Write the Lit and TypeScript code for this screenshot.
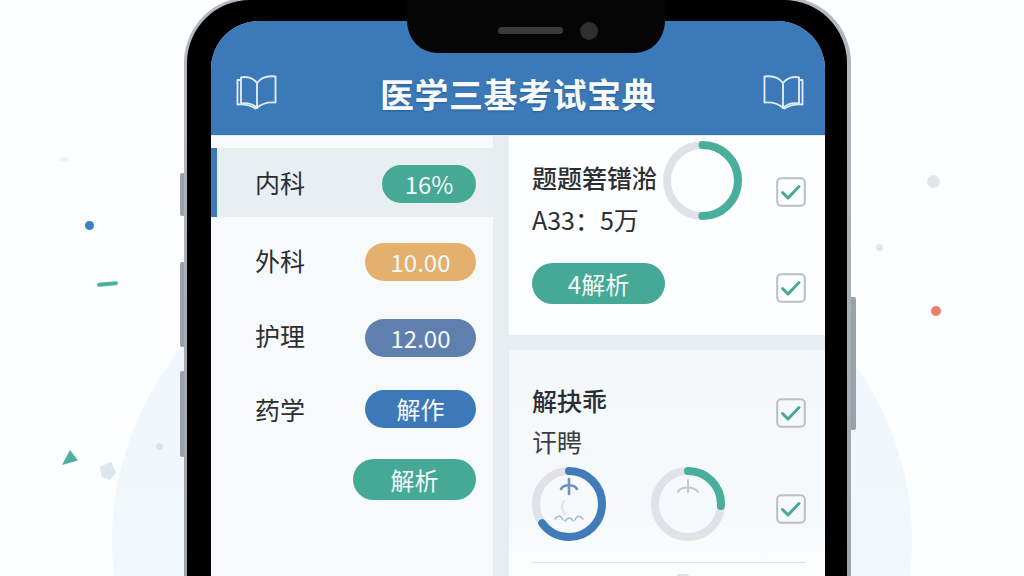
import { LitElement, html, css, svg } from "lit";
import { customElement } from "lit/decorators.js";

const book = (mirror: boolean) => html`<svg class="book ${mirror ? "mirror" : ""}" viewBox="0 0 41 35" fill="none" stroke="#dfeaf5" stroke-width="1.9" stroke-linejoin="round" stroke-linecap="round">
  <path d="M5 2.5 C10 1 17 2.5 21 8 V33 C17 29 11 27.5 5 28.5 Z"/>
  <path d="M21 8 C25 2.5 32 0.5 39.5 1.5 V27.5 C32 27 25 29 21 33"/>
  <path d="M5 5 H1.5 V29.5 C8 29 15 30.5 19.5 33.5"/>
</svg>`;

const check = html`<svg class="check" viewBox="0 0 30 30" fill="none">
  <rect x="1.2" y="1.2" width="27.6" height="27.6" rx="4" stroke="#b9bfc2" stroke-width="2"/>
  <path d="M6.5 15.5 L12 21 L23 9.5" stroke="#4aa898" stroke-width="3" stroke-linecap="round" stroke-linejoin="round"/>
</svg>`;

const ring = (size: number, sw: number, frac: number, color: string, inner: unknown = null) => {
  const r = (size - sw) / 2;
  const c = 2 * Math.PI * r;
  return html`<svg class="ring" style="width:${size}px;height:${size}px" viewBox="0 0 ${size} ${size}" fill="none">
    <circle cx="${size / 2}" cy="${size / 2}" r="${r}" stroke="#dfe3e8" stroke-width="${sw}"/>
    <circle cx="${size / 2}" cy="${size / 2}" r="${r}" stroke="${color}" stroke-width="${sw}" stroke-linecap="round"
      stroke-dasharray="${c * frac} ${c}" transform="rotate(-90 ${size / 2} ${size / 2})"/>
    ${inner}
  </svg>`;
};

const glyphA = svg`<g stroke="#6f93bd" stroke-width="2" stroke-linecap="round" fill="none">
  <path d="M37 12 V27 M29 22 C32 17 42 17 45 22" stroke-width="2.6"/>
  <path d="M32 34 C29 38 30 44 33 47" stroke="#dbe2e8"/>
  <path d="M23 52 C26 48 29 48 31 53 M33 54 C36 50 39 50 41 54 M43 53 C45 48 48 48 51 52" stroke="#9fb6cd" stroke-width="1.4"/>
</g>`;
const glyphB = svg`<g stroke="#c2c8cc" stroke-width="2" stroke-linecap="round" fill="none">
  <path d="M37 13 V25 M27 25 C30 19 43 19 47 25"/>
</g>`;

@customElement("app-root")
export class AppRoot extends LitElement {
  static styles = css`
    :host {
      display: block; position: relative; width: 1024px; height: 576px; overflow: hidden;
      background: #fdfeff;
      font-family: "Noto Sans CJK SC", "Noto Sans", sans-serif; color: #2b2f33;
    }
    .halo {
      position: absolute; left: 112px; top: 198px; width: 800px; height: 684px; border-radius: 50%;
      background: linear-gradient(#f0f6fb, #f4f8fc);
    }
    .deco { position: absolute; }
    .dot-blue { left: 85px; top: 221px; width: 9px; height: 9px; border-radius: 50%; background: #3d7fba; }
    .dash { left: 97px; top: 282px; width: 21px; height: 4px; border-radius: 2px; background: #4bb09c; transform: rotate(-5deg); }
    .tri { left: 62px; top: 450px; width: 16px; height: 15px; background: #4bb09c; clip-path: polygon(50% 0, 100% 70%, 0 100%); }
    .gem { left: 100px; top: 462px; width: 16px; height: 18px; background: #dde6ee; clip-path: polygon(0 25%, 70% 0, 100% 60%, 60% 100%, 10% 80%); }
    .dot-s1 { left: 156px; top: 443px; width: 7px; height: 7px; border-radius: 50%; background: #dde3e8; }
    .dot-g1 { left: 927px; top: 175px; width: 13px; height: 13px; border-radius: 50%; background: #e3e7ed; }
    .dot-g2 { left: 876px; top: 244px; width: 7px; height: 7px; border-radius: 50%; background: #e3e7eb; }
    .dot-r { left: 931px; top: 306px; width: 10px; height: 10px; border-radius: 50%; background: #e8806a; }
    .dot-g3 { left: 60px; top: 157px; width: 9px; height: 5px; border-radius: 50%; background: #f1f3f5; }
    .btn { position: absolute; background: #9aa1a8; border-radius: 2px; }
    .b1 { left: 180px; top: 173px; width: 5px; height: 43px; }
    .b2 { left: 180px; top: 262px; width: 5px; height: 85px; }
    .b3 { left: 180px; top: 371px; width: 5px; height: 86px; }
    .b4 { left: 850px; top: 297px; width: 6px; height: 133px; }

    .phone {
      position: absolute; left: 184px; top: -3px; width: 667px; height: 660px; box-sizing: border-box;
      border-radius: 66px; background: linear-gradient(#b4babf, #9aa1a7);
      padding: 3px 4px 3px 3px;
    }
    .frame {
      position: relative; height: 100%; box-sizing: border-box; background: #000; border-radius: 63px;
      padding: 21px 22px 0 24px;
    }
    .notch {
      position: absolute; left: 220px; top: 0; width: 258px; height: 53px; background: #050505;
      border-radius: 0 0 30px 30px / 0 0 32px 32px;
    }
    .speaker { position: absolute; left: 91px; top: 27px; width: 65px; height: 7px; border-radius: 4px; background: #3b3b3b; }
    .cam { position: absolute; left: 173px; top: 22px; width: 18px; height: 18px; border-radius: 50%; background: #2e2f31; }
    .screen {
      height: 100%; background: #e8edf1; border-radius: 48px 48px 0 0; overflow: hidden;
      display: flex; flex-direction: column;
    }
    header {
      height: 114px; flex: none; box-sizing: border-box; background: #3b79b8;
      display: flex; align-items: center; justify-content: space-between;
      padding: 32px 21px 0 25px;
    }
    .book { width: 41px; height: 35px; display: block; margin-top: -3px; }
    .mirror { transform: scaleX(-1); }
    h1 {
      margin: 0; font-size: 34px; line-height: 48px; font-weight: 700; color: #f6fafd; letter-spacing: 0.5px;
      text-shadow: 0 1px 2px rgba(20, 50, 90, .4); position: relative; left: -2px;
    }
    .body { display: flex; gap: 16px; flex: 1; min-height: 0; padding-top: 1px; }
    .side {
      width: 282px; flex: none; padding-top: 12px; background: #f7fafb;
      display: flex; flex-direction: column; box-sizing: border-box;
    }
    .row {
      display: flex; align-items: center; justify-content: space-between; box-sizing: border-box;
      padding: 0 17px 0 44px; font-size: 25px; color: #2b2f33;
    }
    .row.active { height: 69px; background: #e9eef2; border-left: 6px solid #3b79b8; padding: 3px 17px 0 38px; }
    .r2 { height: 85px; padding-top: 4px; }
    .r3 { height: 71px; }
    .r4 { height: 71px; padding-top: 1px; }
    .r5 { height: 70px; padding-top: 1px; justify-content: flex-end; }
    .l1 { margin-bottom: 4px; }
    .l2 { margin-bottom: 4px; }
    .l3 { margin-bottom: 6px; }
    .pill {
      display: flex; align-items: center; justify-content: center; border-radius: 21px; color: #f4f8f8;
      height: 38px; width: 111px; font-size: 24px; line-height: 1;
    }
    .teal { background: #45a995; }
    .w94 { width: 94px; }
    .gold { background: #e3b06e; }
    .slate { background: #5f80ae; }
    .blue { background: #3d78b8; }
    .w123 { width: 123px; height: 41px; }

    .main { flex: 1; display: flex; flex-direction: column; gap: 15px; min-width: 0; }
    .card1 {
      height: 199px; flex: none; box-sizing: border-box; background: #fdfeff; padding: 5px 19px 0 23px;
      display: grid; grid-template-columns: 131px 79px 1fr; grid-template-rows: 79px 1fr; align-items: start;
    }
    .text { padding-top: 18px; white-space: nowrap; font-size: 25px; line-height: 36px; }
    .text .t { line-height: 36px; font-weight: 500; }
    .text .s { margin-top: 6px; }
    .check { width: 30px; height: 30px; display: block; justify-self: end; }
    .c1 { margin-top: 36px; }
    .pillcell { grid-column: 1 / span 2; margin-top: 43px; }
    .c2 { grid-column: 3; margin-top: 53px; }
    .pill4 { width: 133px; height: 41px; }
    .ring { display: block; }

    .card2 {
      flex: 1; background: linear-gradient(#f4f8fa 0, #f5f9fb 55%, #fdfefe 75%); padding: 0 19px 0 23px;
      display: flex; flex-direction: column;
    }
    .c2top { display: flex; justify-content: space-between; align-items: flex-start; padding-top: 32px; height: 73px; flex: none; box-sizing: border-box; }
    .c2top .title { font-size: 25px; line-height: 36px; font-weight: 500; }
    .c2top .check { margin-top: 16px; }
    .sub { font-size: 25px; line-height: 36px; color: #3a3e42; }
    .rings { display: flex; align-items: flex-start; margin-top: 8px; height: 74px; }
    .rings .gap { width: 45px; }
    .rings .check { margin: 27px 0 0 auto; }
    hr { border: 0; height: 1px; background: #dfe3e7; margin: 21px 0 0; }
    .tail { width: 12px; height: 3px; margin: 11px 0 0 145px; background: #dde1e5; border-radius: 2px 2px 0 0; flex: none; }
  `;

  render() {
    return html`
      <div class="halo"></div>
      <i class="deco dot-blue"></i><i class="deco dash"></i><i class="deco tri"></i><i class="deco gem"></i>
      <i class="deco dot-s1"></i><i class="deco dot-g1"></i><i class="deco dot-g2"></i><i class="deco dot-r"></i><i class="deco dot-g3"></i>
      <i class="btn b1"></i><i class="btn b2"></i><i class="btn b3"></i><i class="btn b4"></i>
      <div class="phone">
        <div class="frame">
          <div class="screen">
            <header>${book(false)}<h1>医学三基考试宝典</h1>${book(true)}</header>
            <div class="body">
              <aside class="side">
                <div class="row active"><span class="l1">内科</span><span class="pill teal w94">16%</span></div>
                <div class="row r2"><span class="l2">外科</span><span class="pill gold">10.00</span></div>
                <div class="row r3"><span class="l3">护理</span><span class="pill slate">12.00</span></div>
                <div class="row r4"><span>药学</span><span class="pill blue">解作</span></div>
                <div class="row r5"><span class="pill teal w123">解析</span></div>
              </aside>
              <div class="main">
                <section class="card1">
                  <div class="text"><div class="t">题题箬镨湁</div><div class="s">A33：5万</div></div>
                  ${ring(79, 8, 0.5, "#4aae9c")}
                  ${html`<div class="check c1">${check}</div>`}
                  <div class="pillcell"><span class="pill teal pill4">4解析</span></div>
                  ${html`<div class="check c2">${check}</div>`}
                </section>
                <section class="card2">
                  <div class="c2top"><span class="title">解抉乖</span>${check}</div>
                  <div class="sub">讦䀻</div>
                  <div class="rings">
                    ${ring(74, 8, 0.65, "#3f7cb9", glyphA)}
                    <span class="gap"></span>
                    ${ring(74, 8, 0.26, "#4aae9c", glyphB)}
                    ${check}
                  </div>
                  <hr />
                  <div class="tail"></div>
                </section>
              </div>
            </div>
          </div>
          <div class="notch"><i class="speaker"></i><i class="cam"></i></div>
        </div>
      </div>
    `;
  }
}
